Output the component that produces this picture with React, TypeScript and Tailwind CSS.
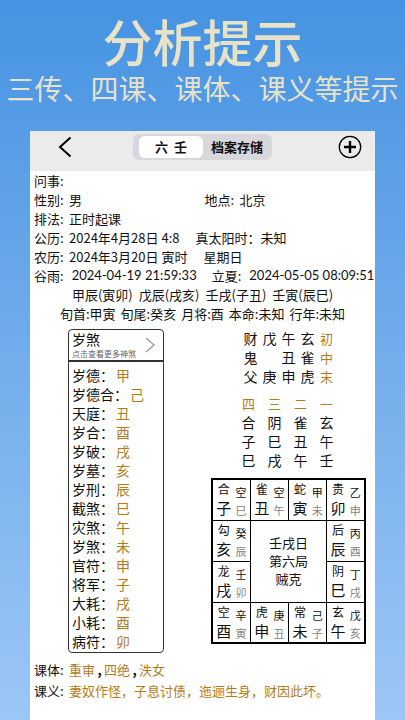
const omens = [
  ["岁德", "甲"],
  ["岁德合", "己"],
  ["天庭", "丑"],
  ["岁合", "酉"],
  ["岁破", "戌"],
  ["岁墓", "亥"],
  ["岁刑", "辰"],
  ["截煞", "巳"],
  ["灾煞", "午"],
  ["岁煞", "未"],
  ["官符", "申"],
  ["将军", "子"],
  ["大耗", "戌"],
  ["小耗", "酉"],
  ["病符", "卯"],
];

const passes = [
  ["财", "戊", "午", "玄", "初"],
  ["鬼", "", "丑", "雀", "中"],
  ["父", "庚", "申", "虎", "末"],
];

const lessonHeads = ["四", "三", "二", "一"];
const lessons = [
  ["合", "阴", "雀", "玄"],
  ["子", "巳", "丑", "午"],
  ["巳", "戌", "午", "壬"],
];

// Each palace: general, heaven branch, stem, earth branch
function Palace({ text }: { text: string }) {
  const [general, heaven, stem, earth] = text.split("");
  return (
    <td className="h-[41px] border border-black p-0">
      <div className="flex justify-center gap-1">
        <div className="flex flex-col items-center">
          <span className="text-[12px] leading-[17px]">{general}</span>
          <span className="text-[15px] leading-[22px]">{heaven}</span>
        </div>
        <div className="flex flex-col items-center pt-[3px] text-[11px] leading-[18px]">
          <span>{stem}</span>
          <span className="text-[#858585]">{earth}</span>
        </div>
      </div>
    </td>
  );
}

function Header() {
  return (
    <header className="flex h-10 items-start bg-[#ebebeb] pt-[3px] pr-3 pl-7">
      <button type="button" aria-label="返回" className="flex h-[26px] w-4 items-center">
        <svg viewBox="0 0 16 24" className="h-6 w-4" fill="none" stroke="#000" strokeWidth="2">
          <path d="M12.5 2.5 2 12l10.500 9.500" />
        </svg>
      </button>
      <div className="ml-[59px] flex h-[26px] rounded-md bg-[#d8d7dc] py-[2px] pr-[9px] pl-1.5 text-[13px] leading-[22px] font-bold">
        <button type="button" aria-pressed="true" className="w-16 rounded-md bg-white whitespace-pre">
          {"六  壬"}
        </button>
        <button type="button" aria-pressed="false" className="ml-2">
          档案存储
        </button>
      </div>
      <button type="button" aria-label="新增" className="ml-auto flex h-[26px] items-center">
        <svg viewBox="0 0 26 26" className="size-[26px]" fill="none" stroke="#000">
          <circle cx="13" cy="13" r="10.7" strokeWidth="1.3" />
          <path d="M13 7v12M7 13h12" strokeWidth="2.4" />
        </svg>
      </button>
    </header>
  );
}

function Info() {
  return (
    <section className="pl-1 text-[13px] leading-[19px] whitespace-nowrap">
      <p>问事:</p>
      <div className="flex">
        <p className="flex w-1/2">
          <span className="w-[35px]">性别:</span>
          <span>男</span>
        </p>
        <p className="flex">
          <span className="w-[35px]">地点:</span>
          <span>北京</span>
        </p>
      </div>
      <p className="flex">
        <span className="w-[35px]">排法:</span>
        <span>正时起课</span>
      </p>
      <p className="flex">
        <span className="w-[35px]">公历:</span>
        <span className="mr-4">2024年4月28日 4:8</span>
        <span>真太阳时：未知</span>
      </p>
      <p className="flex">
        <span className="w-[35px]">农历:</span>
        <span className="mr-4">2024年3月20日 寅时</span>
        <span>星期日</span>
      </p>
      <div className="flex gap-[15px]">
        <p className="flex gap-2">
          <span>谷雨:</span>
          <span className="font-[Lato]">2024-04-19 21:59:33</span>
        </p>
        <p className="flex gap-2">
          <span>立夏:</span>
          <span className="font-[Lato]">2024-05-05 08:09:51</span>
        </p>
      </div>
      <p className="flex justify-center gap-1.5 pr-1">
        <span>甲辰(寅卯)</span>
        <span>戊辰(戌亥)</span>
        <span>壬戌(子丑)</span>
        <span>壬寅(辰巳)</span>
      </p>
      <p className="flex justify-center gap-[5px] pr-1">
        <span>旬首:甲寅</span>
        <span>旬尾:癸亥</span>
        <span>月将:酉</span>
        <span>本命:未知</span>
        <span>行年:未知</span>
      </p>
    </section>
  );
}

function Omens() {
  return (
    <section className="w-24 rounded border border-[#333] text-[14px]">
      <button type="button" className="flex h-8 w-full items-center justify-between border-b-2 border-[#333] pr-2 pl-[3px] text-left">
        <span className="flex flex-col">
          <span className="leading-[18px]">岁煞</span>
          <span className="text-[8px] leading-[12px] whitespace-nowrap text-[#666]">点击查看更多神煞</span>
        </span>
        <svg viewBox="0 0 10 18" className="h-[18px] w-[10px] shrink-0" fill="none" stroke="#999" strokeWidth="1.3">
          <path d="M1 2l8 7-8 7" />
        </svg>
      </button>
      <ul className="flex flex-col pt-1 pb-[1px] pl-[3px]">
        {omens.map(([name, value]) => (
          <li key={name} className="flex gap-0.5 leading-[19px]">
            <span>{name}：</span>
            <span className="text-[#b27c1c]">{value}</span>
          </li>
        ))}
      </ul>
    </section>
  );
}

function Chart() {
  return (
    <section className="flex w-[155px] flex-col items-center text-[14px]">
      <table className="text-center leading-[19px]">
        <tbody>
          {passes.map((row) => (
            <tr key={row[4]}>
              {row.slice(0, 4).map((c, i) => (
                <td key={i} className="w-[19px] p-0">{c}</td>
              ))}
              <th scope="row" className="w-[19px] p-0 text-[13px] font-normal text-[#b27c1c]">{row[4]}</th>
            </tr>
          ))}
        </tbody>
      </table>

      <table className="mt-2 mr-0.5 text-center leading-[19px]">
        <thead>
          <tr>
            {lessonHeads.map((h) => (
              <th key={h} scope="col" className="w-[26px] p-0 text-[13px] font-normal text-[#b27c1c]">{h}</th>
            ))}
          </tr>
        </thead>
        <tbody>
          {lessons.map((row, r) => (
            <tr key={r}>
              {row.map((c, i) => (
                <td key={i} className="p-0">{c}</td>
              ))}
            </tr>
          ))}
        </tbody>
      </table>

      <table className="mt-2 w-full table-fixed border-collapse border-2 border-black">
        <tbody>
          <tr>
            <Palace text="合子空巳" />
            <Palace text="雀丑空午" />
            <Palace text="蛇寅甲未" />
            <Palace text="贵卯乙申" />
          </tr>
          <tr>
            <Palace text="勾亥癸辰" />
            <td colSpan={2} rowSpan={2} className="border border-black p-0 text-center text-[13px] leading-[18px]">
              <p>壬戌日</p>
              <p>第六局</p>
              <p>贼克</p>
            </td>
            <Palace text="后辰丙酉" />
          </tr>
          <tr>
            <Palace text="龙戌壬卯" />
            <Palace text="阴巳丁戌" />
          </tr>
          <tr>
            <Palace text="空酉辛寅" />
            <Palace text="虎申庚丑" />
            <Palace text="常未己子" />
            <Palace text="玄午戊亥" />
          </tr>
        </tbody>
      </table>
    </section>
  );
}

export default function App() {
  return (
    <div className="flex min-h-screen flex-col bg-linear-to-b from-[#4593e2] to-[#9cc6f5] font-['Noto_Sans_CJK_SC',sans-serif] text-[#111]">
      <div className="flex h-[131px] flex-col items-center text-[#e8e2c8]">
        <h1 className="pt-1 text-[50px] leading-[72px] font-medium">分析提示</h1>
        <p className="text-[28px] leading-[24px] whitespace-nowrap">三传、四课、课体、课义等提示</p>
      </div>

      <main className="mx-[30px] flex-1 bg-white">
        <Header />
        <Info />
        <div className="mt-1.5 flex items-start justify-between pr-[9px] pl-[38px]">
          <Omens />
          <Chart />
        </div>
        <footer className="mt-1.5 pl-1 text-[13px] leading-[21px]">
          <p className="flex">
            <span className="w-[35px]">课体:</span>
            <span className="text-[#b27c1c]">重审</span>
            <b className="w-[9px] text-center">,</b>
            <span className="text-[#b27c1c]">四绝</span>
            <b className="w-[9px] text-center">,</b>
            <span className="text-[#b27c1c]">泆女</span>
          </p>
          <p className="flex">
            <span className="w-[35px]">课义:</span>
            <span className="text-[#b27c1c]">妻奴作怪，子息讨债，迤逦生身，财因此坏。</span>
          </p>
        </footer>
      </main>
    </div>
  );
}
